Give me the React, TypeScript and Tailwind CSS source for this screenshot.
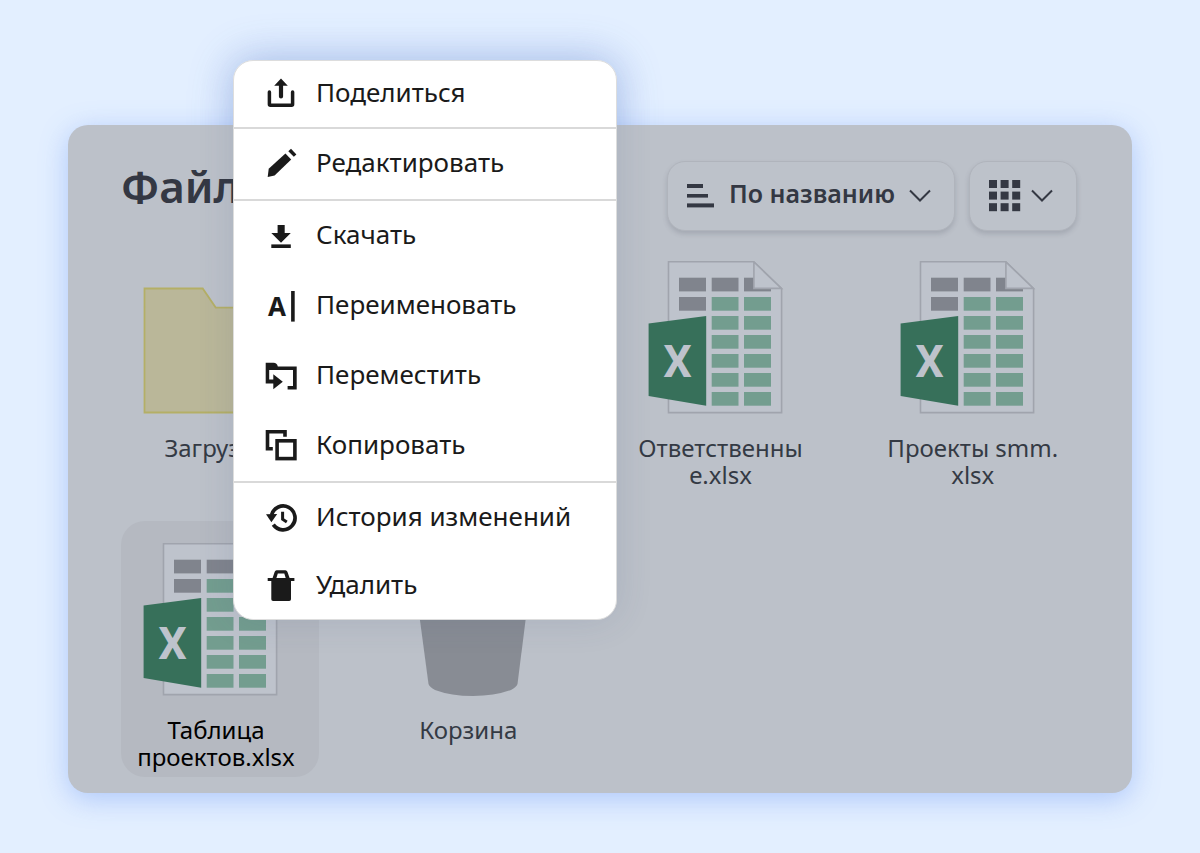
import type { ReactNode } from 'react';

type MenuItem = { label: string; icon: ReactNode; height?: string };

function MenuIcon({ children }: { children: ReactNode }) {
  return (
    <svg viewBox="0 0 36 36" className="size-9 shrink-0" fill="currentColor" aria-hidden="true">
      {children}
    </svg>
  );
}

const shareIcon = (
  <MenuIcon>
    <path d="M18 2.4 24.8 9.8H20.1V20.5a2.1 2.1 0 0 1-4.2 0V9.8H11.2Z" />
    <path d="M6.4 16v12.3a1 1 0 0 0 1 1H28.6a1 1 0 0 0 1-1V16" fill="none" stroke="currentColor" strokeWidth="3.5" strokeLinecap="round" />
  </MenuIcon>
);

const editIcon = (
  <MenuIcon>
    <path d="M4.7 31 5.7 22.8 22.4 7.6 28.2 13.6 11.6 29.6Z" />
    <path d="M28 2.8 33.4 8.4 30.8 10.8 25.3 5.3Z" />
  </MenuIcon>
);

const downloadIcon = (
  <MenuIcon>
    <path d="M14.6 7H21.7V15H27.8L18 24.7 8.3 15H14.6Z" />
    <rect x="8.3" y="26.4" width="19.5" height="3.6" />
  </MenuIcon>
);

const renameIcon = (
  <MenuIcon>
    <text x="14" y="27.6" textAnchor="middle" className="font-['Noto_Sans',sans-serif] text-[26px] font-bold">A</text>
    <rect x="28.1" y="3" width="3.6" height="30.6" />
  </MenuIcon>
);

const moveIcon = (
  <MenuIcon>
    <path d="M2.7 4.7H10.5Q14 4.7 14.8 8.4H33.7V31.4H24.6V28H30V12H6.2V21.6H10.3V16.3L19.8 23.7 10.3 31.3V25.6H2.7Z" />
  </MenuIcon>
);

const copyIcon = (
  <MenuIcon>
    <path d="M2.7 2H23.8V8.8H20.2V5.5H6.3V18.9H9.8V22.4H2.7Z" />
    <rect x="14.1" y="12.8" width="17.8" height="17.8" fill="none" stroke="currentColor" strokeWidth="3.6" />
  </MenuIcon>
);

const historyIcon = (
  <MenuIcon>
    <path d="M8.6 15A11.9 11.9 0 1 1 10.3 24.6" fill="none" stroke="currentColor" strokeWidth="3.7" />
    <path d="M3 14.2 14.2 14 8.4 22.2Z" />
    <path d="M19.6 11.8V19.2L23.8 22" fill="none" stroke="currentColor" strokeWidth="3" />
  </MenuIcon>
);

const deleteIcon = (
  <MenuIcon>
    <path fillRule="evenodd" d="M13.6 2.3H22.4Q23.8 2.3 24.4 3.8L26.6 10H31.4V13H28V31.2Q28 33 26.2 33H10.1Q8.3 33 8.3 31.2V13H4.7V10H9.6L11.7 3.8Q12.2 2.3 13.6 2.3ZM14.8 5.4 13.4 10H22.7L21.3 5.4Z" />
  </MenuIcon>
);

const menuGroups: MenuItem[][] = [
  [{ label: 'Поделиться', icon: shareIcon, height: 'h-[66px]' }],
  [{ label: 'Редактировать', icon: editIcon }],
  [
    { label: 'Скачать', icon: downloadIcon },
    { label: 'Переименовать', icon: renameIcon },
    { label: 'Переместить', icon: moveIcon },
    { label: 'Копировать', icon: copyIcon },
  ],
  [
    { label: 'История изменений', icon: historyIcon },
    { label: 'Удалить', icon: deleteIcon, height: 'h-[66px]' },
  ],
];

const cellRows = [16.7, 36, 55, 74, 93, 112, 131];

function SheetIcon() {
  return (
    <svg viewBox="0 0 146 153" className="h-[153px] w-[146px]" aria-hidden="true">
      <path d="M20.5.7H105.7L133.6 27.7V151.6H20.5Z" fill="#bec3cc" stroke="#a0a4ad" strokeWidth="1.6" />
      {cellRows.map((y, i) => (
        <g key={y}>
          {i < 2 && <rect x="31" y={y} width="27" height="13.7" fill="#80848d" />}
          <rect x="63.7" y={y} width="26.8" height="13.7" fill={i === 0 ? '#80848d' : '#739d8f'} />
          <rect x="96" y={y} width="27" height="13.7" fill={i === 0 ? '#80848d' : '#739d8f'} />
        </g>
      ))}
      <path d="M105.9 1V27.4H133.4Z" fill="#bec3cc" stroke="#a0a4ad" strokeWidth="1.6" />
      <path d="M.6 62.4 58.2 55V144.8L.6 135Z" fill="#37705a" />
      <text x="29.5" y="116" textAnchor="middle" fill="#bec3cc" className="font-['Roboto',sans-serif] text-[45px] font-bold">X</text>
    </svg>
  );
}

function FolderIcon() {
  return (
    <svg viewBox="0 0 146 153" className="h-[153px] w-[146px]" aria-hidden="true">
      <path d="M1.5 27.5H59.7L72.7 46.6H144.5V151.5H1.5Z" fill="#bab799" stroke="#b4af66" strokeWidth="1.8" />
    </svg>
  );
}

function BinIcon() {
  return (
    <svg viewBox="0 0 146 153" className="h-[153px] w-[146px]" aria-hidden="true">
      <path d="M16 10H139L122.5 141Q121.500 144 116 147 100 153 78 153 56 153 40 147 34.500 144 33.500 141Z" fill="#888c94" />
    </svg>
  );
}

type FileEntry = { name: string; icon: ReactNode; selected?: boolean };

const files: (FileEntry | null)[] = [
  { name: 'Загрузки', icon: <FolderIcon /> },
  null,
  { name: 'Ответственны\nе.xlsx', icon: <SheetIcon /> },
  { name: 'Проекты smm.\nxlsx', icon: <SheetIcon /> },
  { name: 'Таблица\nпроектов.xlsx', icon: <SheetIcon />, selected: true },
  { name: 'Корзина', icon: <BinIcon /> },
];

function FileTile({ name, icon, selected }: FileEntry) {
  return (
    <button
      type="button"
      className={`flex h-64 w-[198px] flex-col items-center rounded-3xl pt-[22px] pr-2 text-2xl leading-[27px] ${
        selected ? 'bg-[#b5b9c1] text-black' : 'text-[#343a44]'
      }`}
    >
      {icon}
      <span className="mt-5 whitespace-pre">{name}</span>
    </button>
  );
}

function Chevron() {
  return (
    <svg viewBox="0 0 22 14" className="h-3.5 w-[22px]" fill="none" stroke="currentColor" strokeWidth="2" aria-hidden="true">
      <path d="M1 1.500 11 11.500 21 1.500" />
    </svg>
  );
}

const toolbarButton =
  'flex h-[70px] items-center rounded-[18px] border border-[#b0b4bc] bg-[#bdc2ca] shadow-[0_3px_5px_rgba(70,75,90,0.2)]';

const menuPlace = 'absolute -top-[65px] left-[165px] w-96 rounded-[20px]';

export default function App() {
  return (
    <main className="isolate min-h-screen bg-[#e3efff] px-[68px] pt-[125px] pb-[60px] font-['Noto_Sans',sans-serif] text-[#343843]">
      <section className="relative rounded-[20px] bg-[#bcc1c9] pt-9 pb-4 shadow-[0_6px_28px_rgba(80,130,240,0.36)]">
        <div aria-hidden="true" className={`${menuPlace} -z-10 h-[200px] shadow-[0_0_45px_rgba(70,120,230,0.3)]`} />
        <header className="flex items-center justify-between pr-[55px] pl-[53px]">
          <h1 className="pb-5 text-[44px] leading-[50px] font-semibold">Файлы</h1>
          <div className="flex gap-3.5">
            <button type="button" className={`${toolbarButton} w-72 pl-[19px]`}>
              <svg viewBox="0 0 28 24" className="h-6 w-7" fill="currentColor" aria-hidden="true">
                <rect x="0" y="0" width="16" height="4" />
                <rect x="0" y="10" width="21" height="3.600" />
                <rect x="0" y="19.400" width="27" height="4" />
              </svg>
              <span className="ml-3.5 pb-1 text-[25px] font-semibold">По названию</span>
              <span className="ml-3.5"><Chevron /></span>
            </button>
            <button type="button" aria-label="Вид" className={`${toolbarButton} w-[108px] gap-2.5 pl-[19px]`}>
              <svg viewBox="0 0 32 32" className="size-8" fill="currentColor" aria-hidden="true">
                {[0, 11.6, 23.2].map((y) =>
                  [0, 11.6, 23.2].map((x) => <rect key={`${x}-${y}`} x={x} y={y} width="8" height="8" />),
                )}
              </svg>
              <Chevron />
            </button>
          </div>
        </header>

        <div className="mt-2 grid grid-cols-4 gap-y-[26px] pr-0.5 pl-[53px]">
          {files.map((file, i) => (file ? <FileTile key={file.name} {...file} /> : <div key={i} />))}
        </div>

        <div
          role="menu"
          className={`${menuPlace} overflow-hidden border border-[#dddddd] bg-white text-[#1a1a1a] shadow-[0_0_36px_rgba(60,80,120,0.14)]`}
        >
          {menuGroups.map((group, i) => (
            <div key={i} className="border-b-2 border-[#d9d9d9] last:border-b-0">
              {group.map(({ label, icon, height = 'h-[70px]' }) => (
                <button
                  key={label}
                  type="button"
                  role="menuitem"
                  className={`flex w-full items-center gap-[17px] pl-[29px] text-[26px] leading-9 ${height}`}
                >
                  {icon}
                  <span className="pb-1">{label}</span>
                </button>
              ))}
            </div>
          ))}
        </div>
      </section>
    </main>
  );
}
